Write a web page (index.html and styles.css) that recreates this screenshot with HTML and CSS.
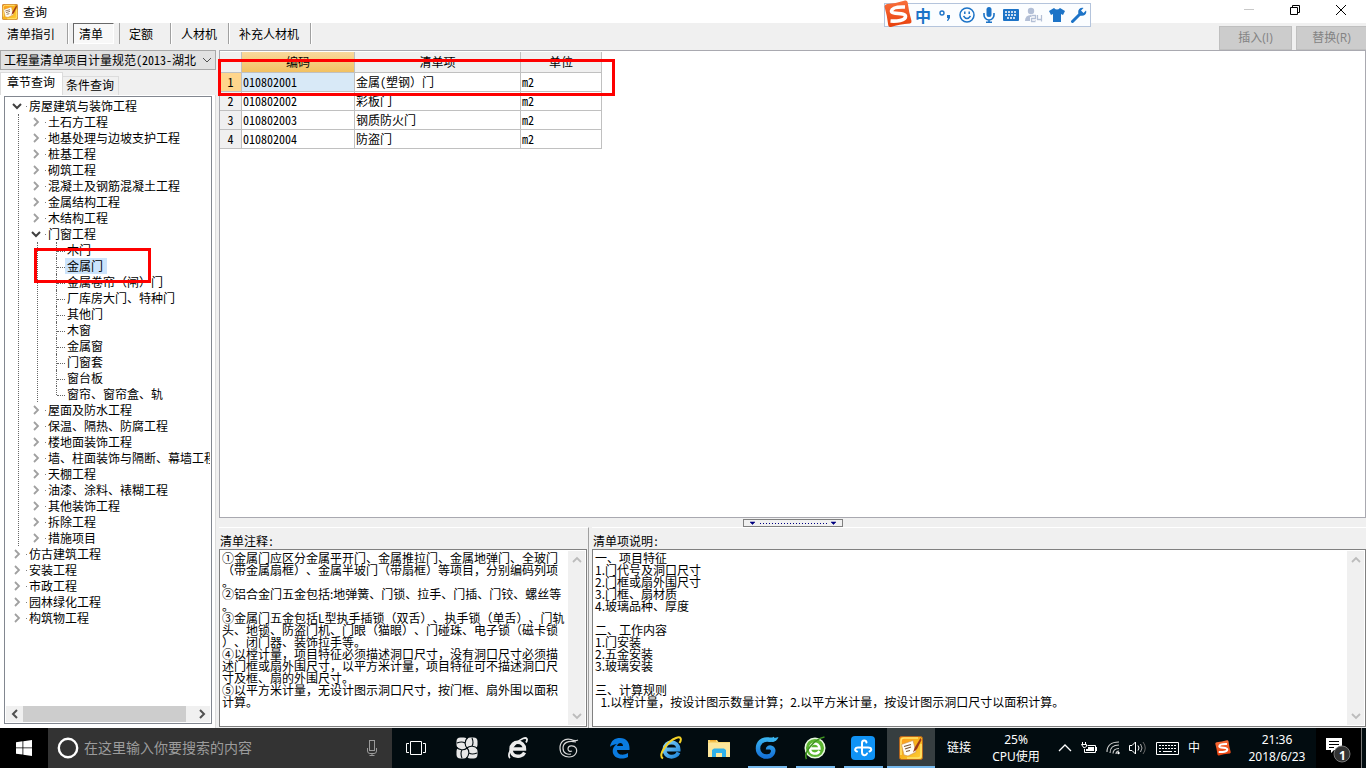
FILE: index.html
```html
<!DOCTYPE html>
<html lang="zh-CN">
<head>
<meta charset="utf-8">
<title>查询</title>
<link rel="stylesheet" href="styles.css">
</head>
<body>
<svg class="defs" width="0" height="0" aria-hidden="true">
  <defs>
    <linearGradient id="gold" x1="0" y1="0" x2="1" y2="1"><stop offset="0" stop-color="#ff9a1f"/><stop offset=".5" stop-color="#f7b21c"/><stop offset="1" stop-color="#ffd23a"/></linearGradient>
    <linearGradient id="sred" x1="0" y1="0" x2="0" y2="1"><stop offset="0" stop-color="#f9703c"/><stop offset="1" stop-color="#e8400c"/></linearGradient>
    <linearGradient id="sky" x1="0" y1="0" x2="1" y2="1"><stop offset="0" stop-color="#7fd0fa"/><stop offset="1" stop-color="#1f87dc"/></linearGradient>
    <linearGradient id="wave" x1="0" y1="0" x2="0" y2="1"><stop offset="0" stop-color="#39b4f0"/><stop offset="1" stop-color="#1673d8"/></linearGradient>
    <symbol id="open" viewBox="0 0 10 10"><path d="M1 3l4 4 4-4" fill="none" stroke="#404040" stroke-width="2"/></symbol>
    <symbol id="shut" viewBox="0 0 10 10"><path d="M3 1l4 4-4 4" fill="none" stroke="#a0a0a0" stroke-width="1.8"/></symbol>
    <symbol id="app" viewBox="0 0 24 24"><rect x=".5" y=".5" width="23" height="23" rx="2" fill="url(#gold)" stroke="#b5651d"/><path d="M2 19V5a3 3 0 0 1 3-3h14M22 8v11a3 3 0 0 1-3 3H8" fill="none" stroke="#ffe36a" stroke-width="1.5"/><path d="M2.500 8.500L14 4.500l3 11.500-8 4-4-1z" fill="#fffdf5" stroke="#c98f50" stroke-width=".6"/><path d="M5 10.500l7-2M6 13l6-2M7 15.500l4-1" stroke="#7a5738" stroke-width="1.100"/><path d="M21.500 2l-6 10-1.500 4.500L18 13l4.500-9z" fill="#9c3818"/></symbol>
    <symbol id="sogou" viewBox="0 0 28 28"><path d="M3 4Q12 3.500 21 .5q2-.5 2.600 1.500Q25 13 27.500 21q.2 2-1.500 2.500Q15 24 7 27q-2 .3-2.700-1.500Q3 15 .5 6.500.5 4.500 3 4z" fill="url(#sred)"/><path d="M21 7Q8 6.500 7.500 11c0 4 14 1 14 5.500 0 4-9 5-15 4.500" fill="none" stroke="#fff" stroke-width="3.600"/></symbol>
  </defs>
</svg>

<header class="titlebar">
  <svg class="appicon"><use href="#app"/></svg>
  <h1>查询</h1>
  <div class="winbtns">
    <button aria-label="最小化"><svg width="12" height="12"><path d="M1 5.500h10" stroke="#c8c8c8"/></svg></button>
    <button aria-label="还原"><svg width="12" height="12" fill="none" stroke="#000"><path d="M1.500 3.500h7v7h-7zM3.500 3v-1.500h7v7H9"/></svg></button>
    <button aria-label="关闭"><svg width="12" height="12" fill="none" stroke="#000"><path d="M1 1l10 10M11 1L1 11"/></svg></button>
  </div>
</header>

<div class="ime" aria-label="输入法">
  <svg class="imelogo" viewBox="0 0 28 28"><use href="#sogou"/></svg>
  <span class="zh">中</span>
  <svg width="16" height="16" viewBox="0 0 16 16"><circle cx="5" cy="6" r="2" fill="none" stroke="#1c73c7" stroke-width="1.400"/><path d="M10 8h3v3l-2 3h-1l1-3h-1z" fill="#1c73c7"/></svg>
  <svg width="16" height="16" viewBox="0 0 16 16" fill="none" stroke="#1c73c7" stroke-width="1.500"><circle cx="8" cy="8" r="7"/><path d="M4.500 9q3.500 5 7 0"/><path d="M5.800 4.500v2.500M10.200 4.500v2.500"/></svg>
  <svg width="16" height="16" viewBox="0 0 16 16"><rect x="5.500" y="0" width="5" height="10" rx="2.500" fill="#1c73c7"/><path d="M3 6v2a5 5 0 0 0 10 0V6M8 13v2.500M5 15.200h6" fill="none" stroke="#1c73c7" stroke-width="1.600"/></svg>
  <svg width="16" height="16" viewBox="0 0 16 16"><rect y="2" width="16" height="12" rx="1" fill="#1c73c7"/><path d="M2 5h12M2 8h12M4 11h8" stroke="#fff" stroke-width="1.500" stroke-dasharray="2 1"/></svg>
  <svg width="18" height="16" viewBox="0 0 18 16"><circle cx="6" cy="4" r="3.200" fill="#b3bfd6"/><path d="M0 14q0-6 6-6t6 6z" fill="#b3bfd6"/><path d="M6.500 8.500h4v3h-4v3h4M12.500 8v4.500h4M16.500 8v6.500" fill="none" stroke="#fff" stroke-width="3"/><path d="M6.500 8.500h4v3h-4v3h4M12.500 8v4.500h4M16.500 8v6.500" fill="none" stroke="#b3bfd6" stroke-width="1.300"/></svg>
  <svg width="16" height="16" viewBox="0 0 16 16"><path d="M5 1q3 3 6 0l5 3-2 4-2-1v8H4V7L2 8 0 4z" fill="#1c73c7"/></svg>
  <svg width="16" height="16" viewBox="0 0 16 16"><path d="M1.500 14.500L9 7" stroke="#1c73c7" stroke-width="3" stroke-linecap="round"/><path d="M12.500 1L10 3.500 12.500 6l2.500-2.500C16.500 7 12 10.500 8.500 8 5.500 5 8 0 12.500 1z" fill="#1c73c7"/></svg>
</div>

<nav class="toolbar">
  <button>清单指引</button>
  <button class="pressed">清单</button>
  <button>定额</button>
  <button>人材机</button>
  <button>补充人材机</button>
  <div class="actions">
    <button disabled>插入(I)</button>
    <button disabled>替换(R)</button>
  </div>
</nav>

<main>
  <aside>
    <div class="combo">
      <select aria-label="清单规范"><option>工程量清单项目计量规范(2013-湖北</option></select>
      <svg width="10" height="10" viewBox="0 0 10 10"><path d="M1 3l4 4 4-4" fill="none" stroke="#505050"/></svg>
    </div>
    <div class="tabs"><button class="on">章节查询</button><button>条件查询</button></div>
    <div class="treepane">
      <div class="tree">
        <ul class="root">
          <li><div class="row"><button aria-label="折叠"><svg><use href="#open"/></svg></button>房屋建筑与装饰工程</div>
            <ul class="chapters">
              <li><div class="row"><button aria-label="展开"><svg><use href="#shut"/></svg></button>土石方工程</div></li>
              <li><div class="row"><button aria-label="展开"><svg><use href="#shut"/></svg></button>地基处理与边坡支护工程</div></li>
              <li><div class="row"><button aria-label="展开"><svg><use href="#shut"/></svg></button>桩基工程</div></li>
              <li><div class="row"><button aria-label="展开"><svg><use href="#shut"/></svg></button>砌筑工程</div></li>
              <li><div class="row"><button aria-label="展开"><svg><use href="#shut"/></svg></button>混凝土及钢筋混凝土工程</div></li>
              <li><div class="row"><button aria-label="展开"><svg><use href="#shut"/></svg></button>金属结构工程</div></li>
              <li><div class="row"><button aria-label="展开"><svg><use href="#shut"/></svg></button>木结构工程</div></li>
              <li><div class="row"><button aria-label="折叠"><svg><use href="#open"/></svg></button>门窗工程</div>
                <ul class="leaves">
                  <li><span>木门</span></li>
                  <li class="sel"><span>金属门</span></li>
                  <li><span>金属卷帘（闸）门</span></li>
                  <li><span>厂库房大门、特种门</span></li>
                  <li><span>其他门</span></li>
                  <li><span>木窗</span></li>
                  <li><span>金属窗</span></li>
                  <li><span>门窗套</span></li>
                  <li><span>窗台板</span></li>
                  <li><span>窗帘、窗帘盒、轨</span></li>
                </ul>
              </li>
              <li><div class="row"><button aria-label="展开"><svg><use href="#shut"/></svg></button>屋面及防水工程</div></li>
              <li><div class="row"><button aria-label="展开"><svg><use href="#shut"/></svg></button>保温、隔热、防腐工程</div></li>
              <li><div class="row"><button aria-label="展开"><svg><use href="#shut"/></svg></button>楼地面装饰工程</div></li>
              <li><div class="row"><button aria-label="展开"><svg><use href="#shut"/></svg></button>墙、柱面装饰与隔断、幕墙工程</div></li>
              <li><div class="row"><button aria-label="展开"><svg><use href="#shut"/></svg></button>天棚工程</div></li>
              <li><div class="row"><button aria-label="展开"><svg><use href="#shut"/></svg></button>油漆、涂料、裱糊工程</div></li>
              <li><div class="row"><button aria-label="展开"><svg><use href="#shut"/></svg></button>其他装饰工程</div></li>
              <li><div class="row"><button aria-label="展开"><svg><use href="#shut"/></svg></button>拆除工程</div></li>
              <li><div class="row"><button aria-label="展开"><svg><use href="#shut"/></svg></button>措施项目</div></li>
            </ul>
          </li>
          <li><div class="row"><button aria-label="展开"><svg><use href="#shut"/></svg></button>仿古建筑工程</div></li>
          <li><div class="row"><button aria-label="展开"><svg><use href="#shut"/></svg></button>安装工程</div></li>
          <li><div class="row"><button aria-label="展开"><svg><use href="#shut"/></svg></button>市政工程</div></li>
          <li><div class="row"><button aria-label="展开"><svg><use href="#shut"/></svg></button>园林绿化工程</div></li>
          <li><div class="row"><button aria-label="展开"><svg><use href="#shut"/></svg></button>构筑物工程</div></li>
        </ul>
        <div class="hscroll">
          <button aria-label="向左"><svg width="10" height="10"><path d="M7 1L3 5l4 4" fill="none" stroke="#505050" stroke-width="2"/></svg></button>
          <div class="thumb"></div>
          <button aria-label="向右"><svg width="10" height="10"><path d="M3 1l4 4-4 4" fill="none" stroke="#505050" stroke-width="2"/></svg></button>
        </div>
        <div class="mark treemark"></div>
      </div>
    </div>
  </aside>

  <section class="work">
    <div class="grid">
      <table>
        <colgroup><col class="c0"><col class="c1"><col class="c2"><col class="c3"></colgroup>
        <thead><tr><th></th><th class="cur">编码</th><th>清单项</th><th>单位</th></tr></thead>
        <tbody>
          <tr class="cur"><th>1</th><td>010802001</td><td>金属(塑钢<span class="full">）</span>门</td><td>m2</td></tr>
          <tr><th>2</th><td>010802002</td><td>彩板门</td><td>m2</td></tr>
          <tr><th>3</th><td>010802003</td><td>钢质防火门</td><td>m2</td></tr>
          <tr><th>4</th><td>010802004</td><td>防盗门</td><td>m2</td></tr>
        </tbody>
      </table>
      <div class="mark gridmark"></div>
    </div>
    <div class="splitter"><button aria-label="收起"><svg width="98" height="6" viewBox="0 0 98 6"><path d="M6 2h5L8.500 4.500zM87 2h5l-2.500 2.500z" fill="#000080" stroke="#000080" stroke-width=".5"/><path d="M16 3.500h68" stroke="#000080" stroke-dasharray="1 2"/></svg></button></div>
    <div class="notes">
      <div class="note">
        <label for="n1">清单注释:</label>
        <div class="memo">
<textarea id="n1" readonly wrap="off">①金属门应区分金属平开门、金属推拉门、金属地弹门、全玻门
（带金属扇框）、金属半玻门（带扇框）等项目，分别编码列项
。
②铝合金门五金包括:地弹簧、门锁、拉手、门插、门铰、螺丝等
。
③金属门五金包括L型执手插锁（双舌）、执手锁（单舌）、门轨
头、地锁、防盗门机、门眼（猫眼）、门碰珠、电子锁（磁卡锁
）、闭门器、装饰拉手等。
④以樘计量，项目特征必须描述洞口尺寸，没有洞口尺寸必须描
述门框或扇外围尺寸，以平方米计量，项目特征可不描述洞口尺
寸及框、扇的外围尺寸。
⑤以平方米计量，无设计图示洞口尺寸，按门框、扇外围以面积
计算。</textarea>
          <div class="vscroll"><svg width="10" height="10"><path d="M1 7l4-4 4 4" fill="none" stroke="#bcbcbc" stroke-width="1.800"/></svg><svg width="10" height="10"><path d="M1 3l4 4 4-4" fill="none" stroke="#bcbcbc" stroke-width="1.800"/></svg></div>
        </div>
      </div>
      <div class="note">
        <label for="n2">清单项说明:</label>
        <div class="memo">
<textarea id="n2" readonly wrap="off">一、项目特征
1.门代号及洞口尺寸
2.门框或扇外围尺寸
3.门框、扇材质
4.玻璃品种、厚度

二、工作内容
1.门安装
2.五金安装
3.玻璃安装

三、计算规则
  1.以樘计量，按设计图示数量计算；2.以平方米计量，按设计图示洞口尺寸以面积计算。</textarea>
          <div class="vscroll"><svg width="10" height="10"><path d="M1 7l4-4 4 4" fill="none" stroke="#bcbcbc" stroke-width="1.800"/></svg><svg width="10" height="10"><path d="M1 3l4 4 4-4" fill="none" stroke="#bcbcbc" stroke-width="1.800"/></svg></div>
        </div>
      </div>
    </div>
  </section>
</main>

<footer class="taskbar">
  <button class="start" aria-label="开始"><svg width="16" height="16" fill="#fff"><path d="M0 2.200L6.500 1.300v6.200H0zM7.300 1.200L16 0v7.500H7.300zM0 8.300h6.500v6.300L0 13.700zM7.300 8.300H16V16l-8.700-1.300z"/></svg></button>
  <div class="search">
    <svg width="22" height="22"><circle cx="11" cy="11" r="9.200" fill="none" stroke="#fff" stroke-width="2.400"/></svg>
    <input type="text" aria-label="搜索" placeholder="在这里输入你要搜索的内容">
    <svg width="12" height="16" fill="none" stroke="#9a9a9a"><rect x="3.500" y=".5" width="5" height="10"/><path d="M1.500 8v3q0 2.500 2.500 2.500h4q2.500 0 2.500-2.500V8M6 13.500v2M3.500 15.500h5"/></svg>
  </div>
  <div class="pins">
    <button aria-label="任务视图"><svg width="20" height="14" fill="none" stroke="#fff"><path d="M4.500.5h11v13h-11zM3 2.500H.5v9H3M17 2.500h2.500v9H17"/></svg></button>
    <button aria-label="风车"><svg width="22" height="22" viewBox="0 0 22 22"><rect x=".5" y=".5" width="11" height="11" rx="4" fill="#e8e8e8"/><rect x="10.500" y=".5" width="11" height="11" rx="4" fill="#e8e8e8"/><rect x=".5" y="10.500" width="11" height="11" rx="4" fill="#e8e8e8"/><rect x="10.500" y="10.500" width="11" height="11" rx="4" fill="#e8e8e8"/><path d="M11 11C8 8 9 3 12 0M11 11c3-3 8-2 11 1M11 11c3 3 2 8-1 11M11 11c-3 3-8 2-11-1M1 6q5-2 8 0M16 1q2 5 0 8M21 16q-5 2-8 0M6 21q-2-5 0-8" fill="none" stroke="#020c10" stroke-width="1.100"/></svg></button>
    <button aria-label="浏览器"><svg width="22" height="24" viewBox="0 0 22 24" fill="none" stroke="#ececec"><path d="M4 13h13.500C17.500 4 4 4 4 13c0 9 11 9 13.500 3.500" stroke-width="3.400"/><path d="M3 22C-1 18 8 6 16 2.500c4-1.500 5 1 3 4" stroke-width="1.800"/></svg></button>
    <button aria-label="旋风"><svg width="20" height="20" viewBox="0 0 20 20" fill="none" stroke="#d8d8d8" stroke-width="1.200"><path d="M19 2q-3 1.500-7-.5C5 0 1 4 1 10s4 9 9 9c6 0 9-5 7-9-2-3-8-3-8 1 0 2 2 3 4 2"/><path d="M17 4C9 2 4 5 4 10s4 7 8 6"/></svg></button>
    <button aria-label="Edge"><svg width="20" height="22" viewBox="0 0 20 22"><path d="M0 10C1 3 5 1 10 1c7 0 10 5 9.500 12H7c0 5 6 6 11 3v4C10 24 1 20 3 12c.5-2 2-4 4-5C3 7.500 1 8.500 0 10zm7-1h6c0-4-5-4-6 0z" fill="#0a7be0"/></svg></button>
    <button aria-label="IE"><svg width="24" height="24" viewBox="0 0 24 24" fill="none"><path d="M5.500 13.500h14C19.500 4 5.500 4 5.500 13.500c0 9 11.500 9 14 3" stroke="url(#sky)" stroke-width="4"/><path d="M4 22.500C-2 19 9 5 17 2c5-2 6 1 3.500 5" stroke="#f5d327" stroke-width="2"/></svg></button>
  </div>
  <div class="running">
    <button aria-label="文件夹"><svg width="22" height="18" viewBox="0 0 22 18"><path d="M0 1h9l1.500 2H22v15H0z" fill="#f8d775"/><path d="M0 4h22v14H0z" fill="#fde69b"/><path d="M2 1h6v1.500H2z" fill="#f0a92e"/><path d="M4 18v-7l2-1.500h10l2 1.500v7h-4v-4H8v4z" fill="#2fb0ea"/></svg></button>
    <button class="live" aria-label="广联达"><svg width="24" height="24" viewBox="0 0 24 24" fill="none"><path d="M20 2.500Q17 4.500 13 3.500C7 3 3 7 3 12.500s5 8.500 9.500 8c6-.5 7-7 4-8.500-2-1-3.500 0-3.500 1.500" stroke="url(#wave)" stroke-width="4.500"/><path d="M23.500 1l-4 1L16 6q6 0 7.500-5z" fill="#39b4f0"/></svg></button>
    <button class="live" aria-label="360浏览器"><svg width="24" height="24" viewBox="0 0 24 24"><circle cx="12" cy="12" r="9.800" fill="#5cb531" stroke="#e8f8df" stroke-width="1.500"/><path d="M7 12.500h9.500C16 5.500 7 6 7 12.500c0 6 7 6.500 9.500 2.500" fill="none" stroke="#fff" stroke-width="2.400"/><path d="M3.500 23C0 17 11 3 21.500 1" fill="none" stroke="#3e9420" stroke-width="1.500"/></svg></button>
    <button class="live" aria-label="云助手"><svg width="24" height="24"><rect width="24" height="24" rx="4" fill="#1093f5"/><path d="M15.500 6.500C15 3.500 11 4 11 7v9c0 4 4 4 5 1.500M6 15.500c-3-1-2-4 1-4h10c4 0 4 3 1.500 4" fill="none" stroke="#fff" stroke-width="2" stroke-linecap="round"/></svg></button>
    <button class="live active" aria-label="查询"><svg width="24" height="24"><use href="#app"/></svg></button>
  </div>
  <div class="links">链接</div>
  <div class="cpu">25%<br>CPU使用</div>
  <div class="tray">
    <svg width="14" height="10"><path d="M1 8l6-6 6 6" fill="none" stroke="#fff" stroke-width="1.300"/></svg>
    <svg width="16" height="12" fill="none" stroke="#fff"><path d="M6.500 3.500h8v7h-11V7M1.500 0v2.500M4.500 0v2.500M.5 2.500h5v2L3 6z"/><path d="M7 5h6v4H5V7h2z" fill="#fff" stroke="none"/><path d="M15.500 5v4"/></svg>
    <svg width="14" height="14" fill="none" stroke="#d0d0d0"><path d="M1 11C1 5 5 1 13 1M4 12c0-5 3-8 9-8M7 12.500c0-3 2-5 6-5M10 13c0-2 1-3 3-3" stroke-width="1.100"/><circle cx="12.500" cy="12" r="1.200" fill="#fff" stroke="none"/></svg>
    <svg width="18" height="14" fill="none" stroke="#fff"><path d="M.5 4.500H3L6.500 1v12L3 9.500H.5zM9 4.500q2 2.500 0 5"/><path d="M11.500 3q3 4 0 8" stroke="#b0b0b0"/><path d="M14 1q4.500 6 0 12" stroke="#666"/></svg>
    <svg width="23" height="13" fill="none" stroke="#fff"><path d="M.5.5h22v12H.5z"/><path d="M3 3.500h17M3 6.500h17" stroke-dasharray="2 1"/><path d="M3 9.500h2M7 9.500h9M18 9.500h2"/></svg>
    <span>中</span>
    <svg width="16" height="16" viewBox="0 0 28 28"><use href="#sogou"/></svg>
  </div>
  <div class="clock">21:36<br>2018/6/23</div>
  <button class="notice" aria-label="通知"><svg width="25" height="25"><path d="M0 0h16v12H8l-3 3v-3H0z" fill="#fff"/><path d="M3 3.500h10M3 6.500h10M3 9.500h5" stroke="#000"/><circle cx="16" cy="16" r="8" fill="#333" stroke="#777"/></svg><span>1</span></button>
</footer>
</body>
</html>
```

FILE: styles.css
```css
* { box-sizing: border-box; }

html, body { height: 100%; }

body {
  margin: 0;
  display: flex;
  flex-direction: column;
  background: #f0f0f0;
  color: #000;
  font: 12px/16px "Noto Sans CJK SC", sans-serif;
  text-spacing-trim: space-all;
  overflow: hidden;
}

button, select, input, textarea {
  font: inherit;
  font-feature-settings: inherit;
  text-spacing-trim: inherit;
  color: inherit;
  margin: 0;
  padding: 0;
  border: 0;
  border-radius: 0;
  background: none;
  outline: 0;
}

ul { list-style: none; margin: 0; padding: 0; }
svg { display: block; flex: none; }
.defs { position: absolute; }

/* title bar */
.titlebar { display: flex; align-items: center; flex: none; height: 23px; padding: 0 2px; background: #fff; }
.appicon { width: 16px; height: 16px; }
.titlebar h1 { margin: 0 0 0 5px; font-size: 12px; font-weight: 400; }
.winbtns { display: flex; margin-left: auto; }
.winbtns button { width: 46px; height: 23px; padding-bottom: 3px; display: grid; place-items: center; }

.ime {
  position: absolute;
  top: 3px;
  right: 275px;
  height: 24px;
  display: flex;
  align-items: center;
  gap: 6px;
  padding: 0 3px 0 30px;
  border: 1px solid #b4c4dc;
  background: #fbfdff;
}
.imelogo { position: absolute; left: -1px; top: -4px; width: 28px; height: 28px; }
.ime .zh { width: 16px; text-align: center; font-size: 16px; font-weight: 700; color: #1c73c7; }

/* toolbar */
.toolbar { display: flex; align-items: flex-start; flex: none; height: 27px; padding-left: 2px; }
.toolbar > button { height: 21px; padding: 0 11px 0 10px; }
.toolbar > button:first-child { padding: 0 12px 0 5px; }
.toolbar > button:not(.pressed) { border-right: 1px solid #a0a0a0; box-shadow: 1px 0 #fff; }
.toolbar > .pressed {
  margin: 0 5px;
  padding: 0 10px 0 5px;
  border: 1px solid #fff;
  border-top-color: #696969;
  border-left-color: #696969;
  background: #f8f8f8;
}
.toolbar > .pressed + button { border-left: 1px solid #a0a0a0; padding: 0 17px 0 9px; }
.actions { display: flex; gap: 4px; margin-left: auto; align-self: flex-end; }
.actions button { width: 73px; height: 24px; border: 1px solid #bfbfbf; background: #ccc; color: #838383; font-family: "DejaVu Sans", "Noto Sans CJK SC", sans-serif; font-family: "Open Sans", "Noto Sans CJK SC", sans-serif; }
.actions button:last-child { width: 70px; border-right: 0; }

main { flex: 1; min-height: 0; display: flex; }

/* left panel */
aside { width: 216px; flex: none; display: flex; flex-direction: column; margin-right: 3px; }
.combo { display: flex; align-items: center; border: 1px solid #a8a8a8; background: #e2e2e2; height: 20px; }
.combo select { flex: 1; min-width: 0; height: 18px; padding-left: 3px; appearance: none; font-feature-settings: "hwid"; }
.combo svg { margin-right: 3px; }
.tabs { display: flex; align-items: flex-end; height: 23px; margin-top: 2px; }
.tabs button { height: 19px; padding: 0 4px 2px 3px; border: 1px solid #dcdcdc; border-left: 0; border-bottom: 0; }
.tabs .on { height: 23px; padding: 0 7px 4px 6px; background: #fff; border-left: 1px solid #dcdcdc; }
.treepane { flex: 1; min-height: 0; display: flex; padding: 1px 3px 4px 4px; background: #fff; border: solid #dcdcdc; border-width: 0 1px 0 0; }
.tree { position: relative; flex: 1; min-width: 0; display: flex; flex-direction: column; border: 1px solid #828790; padding: 1px; }
.root { flex: 1; min-height: 0; overflow: hidden; padding-left: 6px; }
.row { display: flex; align-items: center; height: 16px; white-space: nowrap; }
.row button { display: flex; align-items: center; width: 17px; flex: none; }
.row button::after { content: ""; width: 1px; height: 1px; margin-left: 4px; background: #808080; }
.row svg { width: 10px; height: 10px; }
.chapters { margin-left: 6px; border-left: 1px dotted #666; }
.chapters .row { padding-left: 12px; }
.leaves { margin-left: 18px; border-left: 1px dotted #666; padding: 0 0 7px 18px; }
.leaves li { display: flex; height: 16px; border-left: 1px dotted #666; white-space: nowrap; }
.leaves li::before { content: ""; width: 8px; height: 9px; border-bottom: 1px dotted #666; flex: none; }
.leaves li:last-child { height: 9px; }
.leaves span { height: 16px; padding: 0 4px 0 2px; }
.leaves .sel span { background: #cce4fc; }
.hscroll { display: flex; flex: none; height: 16px; background: #f0f0f0; }
.hscroll button { width: 17px; display: grid; place-items: center; }
.thumb { flex: 1; margin-right: 7px; background: #cdcdcd; }

.mark { position: absolute; border: 3px solid #fe0000; pointer-events: none; }
.treemark { left: 29px; top: 151px; width: 117px; height: 35px; }
.gridmark { left: -2px; top: 8px; width: 397px; height: 37px; }

/* work area */
.work { flex: 1; min-width: 0; display: flex; flex-direction: column; }
.grid { position: relative; flex: 1; min-height: 0; background: #fff; border: 1px solid #a9a9b0; padding-top: 1px; }
table { border-collapse: separate; border-spacing: 0; table-layout: fixed; width: 382px; font-feature-settings: "hwid"; }
.full { font-feature-settings: normal; }
.c0 { width: 22px; }
.c1 { width: 113px; }
.c2 { width: 166px; }
.c3 { width: 81px; }
th, td { height: 19px; padding: 0 1px; border: solid #c0c0c0; border-width: 0 1px 1px 0; font-weight: 400; text-align: left; line-height: 16px; }
th { background: #f0f0f0; text-align: center; }
thead th { height: 21px; }
thead .cur { background: linear-gradient(#f9d99c, #f2c161); }
tbody .cur th { background: #ffd58c; }
.cur td:nth-child(2) { background: #d8e9f7; }

.splitter { flex: none; height: 9px; display: flex; justify-content: center; }
.splitter button { width: 100px; height: 8px; margin-top: 1px; border: 1px solid #808080; }

.notes { display: grid; grid-template-columns: 370px 1fr; gap: 3px; flex: none; height: 201px; }
.note { display: flex; flex-direction: column; min-width: 0; border-top: 1px solid #fff; }
.note:first-child { border-right: 1px solid #a0a0a0; padding-right: 1px; }
.note label { padding: 5px 0 0 1px; height: 21px; flex: none; font-feature-settings: "hwid"; }
.memo { flex: 1; min-height: 0; display: flex; border: 1px solid #808080; background: #fff; padding: 1px; margin-bottom: 1px; }
.memo textarea { flex: 1; min-width: 0; resize: none; overflow: hidden; padding: 1px; line-height: 12px; white-space: pre; }
.vscroll { width: 17px; flex: none; display: flex; flex-direction: column; justify-content: space-between; align-items: center; padding: 4px 0; background: #f0f0f0; }

/* taskbar */
.taskbar { display: flex; flex: none; height: 40px; background: #020c10; color: #fff; font-family: "Noto Sans", "Noto Sans CJK SC", sans-serif; }
.taskbar button { display: grid; place-items: center; width: 48px; }
.taskbar .start { background: #000; }
.search { display: flex; align-items: center; width: 344px; padding: 0 14px 0 9px; background: #333; }
.search input { flex: 1; min-width: 0; margin-left: 5px; font-size: 14px; line-height: 20px; }
.search input::placeholder { color: #9c9c9c; opacity: 1; }
.pins { display: flex; gap: 3px; }
.running { display: flex; }
.taskbar .live { background: linear-gradient(#76b9ed, #76b9ed) bottom / 39px 2px no-repeat; }
.taskbar .active { background: linear-gradient(#76b9ed, #76b9ed) bottom / 100% 2px no-repeat #363e40; }
.links { margin-left: 12px; align-self: center; }
.cpu, .clock { text-align: center; line-height: 17px; padding-top: 3px; }
.cpu { margin-left: 20px; width: 50px; }
.tray { display: flex; align-items: center; margin-left: auto; gap: 9px; }
.tray span { margin-right: 6px; }
.clock { width: 78px; margin-left: 7px; }
.taskbar .notice { position: relative; width: 46px; background: #000; border-right: 1px solid #777; margin-right: 4px; padding-top: 4px; }
.notice span { position: absolute; left: 23px; top: 20px; font-size: 12px; line-height: 16px; font-weight: 700; }
```
